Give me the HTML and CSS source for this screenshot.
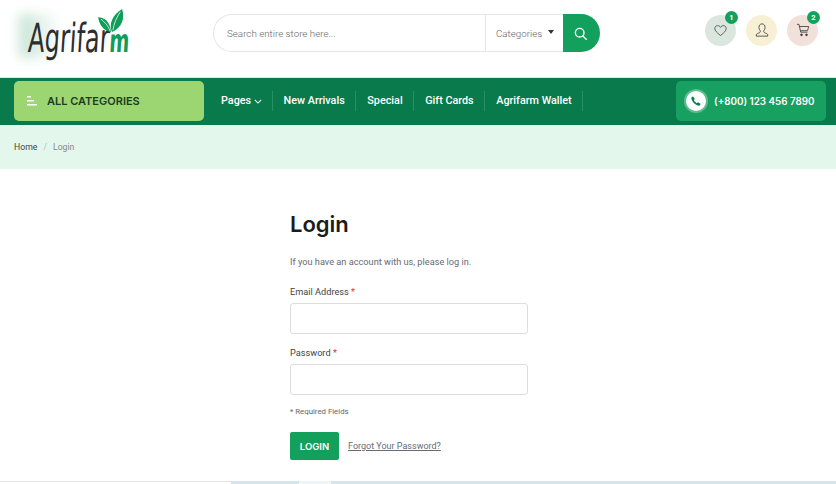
FILE: index.html
```html
<!DOCTYPE html>
<html lang="en">
<head>
  <meta charset="UTF-8">
  <meta name="viewport" content="width=device-width, initial-scale=1.0">
  <title>Agrifarm Login</title>
  <link rel="stylesheet" href="styles.css">
</head>
<body>
  <header class="top-header">
    <a class="logo">
      <span class="logo-glow"></span>
      <span class="logo-text">Agrifar<span class="logo-m">m</span></span>
      <svg class="logo-leaf" viewBox="0 0 30 26">
        <path d="M14 25C6 24 1 17 0 9c7 0 13 5 14 16z" fill="#0f9d58"/>
        <path d="M15 25C11 16 16 6 26 0c3 10 0 20-11 25z" fill="#0f9d58"/>
        <path d="M3 11c4 3 8 7 10 13M24 3c-4 6-7 13-8 20" stroke="#fff" stroke-width=".8" fill="none"/>
      </svg>
    </a>
    <div class="search-box">
      <span class="search-input">Search entire store here...</span>
      <span class="search-cat">Categories <i class="caret"></i></span>
      <button class="search-btn">
        <svg viewBox="0 0 16 16" width="13" height="13" fill="none" stroke="#fff" stroke-width="1.7"><circle cx="7" cy="7" r="5.3"/><path d="M11 11l4 4" stroke-linecap="round"/></svg>
      </button>
    </div>
    <div class="header-icons">
      <a class="round-icon wish">
        <svg viewBox="0 0 16 16" width="13" height="13" fill="none" stroke="#333" stroke-width=".9"><path d="M8 14.2C3.5 10.6 1 8.4 1 5.4 1 3.3 2.6 2 4.4 2 5.9 2 7.2 2.8 8 4.2 8.800 2.800 10.100 2 11.600 2 13.400 2 15 3.300 15 5.400c0 3-2.500 5.200-7 8.800z"/></svg>
        <span class="badge">1</span>
      </a>
      <a class="round-icon user">
        <svg viewBox="0 0 16 16" width="14" height="14" fill="none" stroke="#333" stroke-width=".9"><path d="M8 1C5.800 1 4.500 2.700 4.500 5c0 1.700.6 3 1.500 4 .3.900 0 1.700-1 2.200-1.500.7-3.200 1-3.500 2.100V15h13v-1.700c-.3-1.100-2-1.400-3.500-2.100-1-.5-1.300-1.300-1-2.200.9-1 1.500-2.300 1.500-4C11.500 2.700 10.200 1 8 1z"/></svg>
      </a>
      <a class="round-icon cart">
        <svg viewBox="0 0 16 16" width="14" height="14" fill="none" stroke="#333" stroke-width=".9"><path d="M1 1.500h2.400l2 9h7.600M4 4h10.500l-1.300 4.800H5"/><circle cx="6.300" cy="13.500" r="1" fill="#333"/><circle cx="12" cy="13.500" r="1" fill="#333"/></svg>
        <span class="badge">2</span>
      </a>
    </div>
  </header>

  <nav class="main-nav">
    <a class="all-cats">
      <svg viewBox="0 0 11 10" width="11" height="10" fill="#fff"><rect x="0" y="0" width="4" height="1.500"/><rect x="0" y="4" width="7" height="1.500"/><rect x="0" y="8" width="10" height="1.500"/></svg>
      <span>ALL CATEGORIES</span>
    </a>
    <ul class="nav-links">
      <li class="first">Pages <svg viewBox="0 0 10 6" width="8" height="5" fill="none" stroke="#fff" stroke-width="1.300"><path d="M1 1l4 4 4-4"/></svg></li>
      <li>New Arrivals</li>
      <li>Special</li>
      <li>Gift Cards</li>
      <li>Agrifarm Wallet</li>
    </ul>
    <a class="phone-box">
      <span class="phone-circle">
        <svg viewBox="0 0 16 16" width="10" height="10" fill="#0b7a4b"><path d="M3.600 1l2.200 3.200c.2.300.1.700-.1 1L4.600 6.500c.8 2 2.800 4 4.900 4.900l1.300-1.100c.3-.2.700-.3 1-.1L15 12.400c.3.200.4.600.2.900l-1.200 1.500c-.4.500-1 .7-1.600.6C6.900 14.600 1.400 9.100.6 3.600.5 3 .7 2.400 1.200 2L2.700.8c.3-.2.700-.1.900.2z"/></svg>
      </span>
      <span>(+800) 123 456 7890</span>
    </a>
  </nav>

  <div class="breadcrumb">
    <span class="crumb-home">Home</span>
    <span class="crumb-sep">/</span>
    <span class="crumb-now">Login</span>
  </div>

  <main class="login-page">
    <h1>Login</h1>
    <p class="intro">If you have an account with us, please log in.</p>
    <form class="login-form">
      <label>Email Address <b>*</b></label>
      <input type="text">
      <label>Password <b>*</b></label>
      <input type="password">
      <p class="required">* Required Fields</p>
      <div class="form-actions">
        <button type="button" class="login-btn">LOGIN</button>
        <a class="forgot">Forgot Your Password?</a>
      </div>
    </form>
  </main>

  <div class="bottom-strip">
    <div class="strip-white"></div>
    <div class="strip-blue"></div>
    <div class="strip-light"></div>
    <div class="strip-blue grow"></div>
  </div>
</body>
</html>
```

FILE: styles.css
```css
* {
  box-sizing: border-box;
}
body {
  margin: 0;
  height: 484px;
  overflow: hidden;
  font-family: Roboto, Inter, sans-serif;
  background: #fff;
  color: #222;
}
.top-header {
  height: 77px;
  display: flex;
  align-items: center;
  padding: 0 18px 0 14px;
}
.logo {
  position: relative;
  width: 199px;
  height: 77px;
  flex: none;
}
.logo-glow {
  position: absolute;
  left: 5px;
  top: 14px;
  width: 42px;
  height: 44px;
  background: linear-gradient(to right, #c4e2d3, rgba(196, 226, 211, 0));
  filter: blur(6px);
}
.logo-text {
  position: absolute;
  left: 16px;
  top: 13px;
  font-family: "DejaVu Sans", sans-serif;
  font-size: 40px;
  line-height: 50px;
  color: #2d2d2d;
  transform: scaleX(0.6) skewX(-6deg);
  transform-origin: left top;
  white-space: nowrap;
}
.logo-m {
  color: #0f9d58;
  font-size: 32px;
  font-weight: bold;
}
.logo-leaf {
  position: absolute;
  left: 84px;
  top: 9px;
  width: 28px;
  height: 24px;
}
.search-box {
  width: 387px;
  height: 38px;
  flex: none;
  margin-bottom: 11px;
  display: flex;
  align-items: stretch;
  border: 1px solid #e6e6e6;
  border-right: 0;
  border-radius: 19px;
  font-weight: 300;
  font-size: 9.800px;
  color: #666;
}
.search-input {
  flex: 1;
  padding-left: 13px;
  display: flex;
  align-items: center;
}
.search-cat {
  width: 78px;
  border-left: 1px solid #e6e6e6;
  display: flex;
  align-items: center;
  gap: 6px;
  padding-left: 10px;
}
.caret {
  width: 0;
  height: 0;
  border-left: 3.500px solid transparent;
  border-right: 3.500px solid transparent;
  border-top: 4px solid #333;
  margin-bottom: 2px;
}
.search-btn {
  width: 37px;
  margin: -1px 0;
  border: none;
  background: #12a05c;
  border-radius: 0 19px 19px 0;
  display: flex;
  align-items: center;
  justify-content: center;
  padding: 0 2px 0 0;
}
.header-icons {
  margin-left: auto;
  display: flex;
  gap: 10px;
  margin-bottom: 17px;
}
.round-icon {
  position: relative;
  width: 31px;
  height: 31px;
  border-radius: 50%;
  display: flex;
  align-items: center;
  justify-content: center;
}
.wish { background: #dbe7de; }
.user { background: #f7f0d5; }
.cart { background: #f1e1da; }
.badge {
  position: absolute;
  top: -4px;
  right: -2px;
  width: 13px;
  height: 13px;
  border-radius: 50%;
  background: #12a05c;
  color: #fff;
  font-size: 7.500px;
  font-weight: 700;
  line-height: 13px;
  text-align: center;
}
.main-nav {
  height: 48px;
  background: #087a4c;
  border-top: 1px solid #dbe9e2;
  display: flex;
  align-items: center;
  padding: 0 10px 1px 14px;
}
.all-cats {
  width: 190px;
  height: 40px;
  background: #9cd673;
  border-radius: 5px;
  display: flex;
  align-items: center;
  gap: 9px;
  padding-left: 13px;
  font-family: Inter, sans-serif;
  font-size: 11px;
  font-weight: 600;
  color: #1d3b1f;
}
.nav-links {
  list-style: none;
  margin: 0;
  padding: 0 0 0 17px;
  display: flex;
  align-items: center;
  color: #fff;
  font-size: 10.800px;
  font-weight: 500;
}
.nav-links li {
  padding: 0 10.800px;
  height: 20px;
  line-height: 20px;
  border-right: 1px solid #2b8f66;
  white-space: nowrap;
}
.nav-links li.first {
  padding: 0 10px 0 0;
}
.phone-box {
  margin-left: auto;
  width: 150px;
  height: 40px;
  background: #18a060;
  border-radius: 5px;
  display: flex;
  align-items: center;
  gap: 8px;
  padding-left: 10px;
  color: #fff;
  font-family: Inter, sans-serif;
  font-size: 9.800px;
  font-weight: 600;
  white-space: nowrap;
}
.phone-circle {
  width: 20px;
  height: 20px;
  border-radius: 50%;
  background: #fff;
  box-shadow: 0 0 0 2px rgba(255, 255, 255, 0.3);
  display: flex;
  align-items: center;
  justify-content: center;
}
.breadcrumb {
  height: 44px;
  background: #e4f7ec;
  display: flex;
  align-items: center;
  gap: 6px;
  padding: 0 14px 1px;
  font-size: 8.700px;
}
.crumb-home { color: #444; }
.crumb-sep { color: #bbb; }
.crumb-now { color: #888; }
.login-page {
  height: 312px;
  padding: 41px 0 0 290px;
}
.login-page h1 {
  margin: 0;
  font-family: Inter, sans-serif;
  font-size: 22px;
  line-height: 28px;
  font-weight: 600;
  color: #1c1c1c;
}
.intro {
  margin: 17px 0 0;
  font-size: 9.200px;
  line-height: 14px;
  color: #666b75;
}
.login-form {
  width: 238px;
  margin-top: 17px;
  display: flex;
  flex-direction: column;
}
.login-form label {
  font-size: 9.200px;
  line-height: 12px;
  color: #444;
}
.login-form label b {
  color: #d33;
  font-weight: 400;
}
.login-form input {
  height: 31px;
  margin: 5px 0 13px;
  border: 1px solid #ddd;
  border-radius: 3px;
  background: #fff;
}
.required {
  margin: -2px 0 0;
  font-size: 7.800px;
  line-height: 12px;
  color: #666;
}
.form-actions {
  display: flex;
  align-items: center;
  gap: 9px;
  margin-top: 14px;
}
.login-btn {
  width: 49px;
  height: 28px;
  padding: 0;
  border: none;
  border-radius: 2px;
  background: #12a05c;
  color: #fff;
  font-family: Inter, sans-serif;
  font-size: 9.500px;
  font-weight: 600;
}
.forgot {
  font-size: 9px;
  color: #666b75;
  text-decoration: underline;
}
.bottom-strip {
  height: 3px;
  display: flex;
}
.strip-white {
  width: 231px;
  border-top: 1px solid #e4e4e4;
}
.strip-blue {
  width: 68px;
  background: #d6e4ec;
}
.strip-light {
  width: 32px;
  background: #edf5f7;
}
.grow {
  flex: 1;
}
```
